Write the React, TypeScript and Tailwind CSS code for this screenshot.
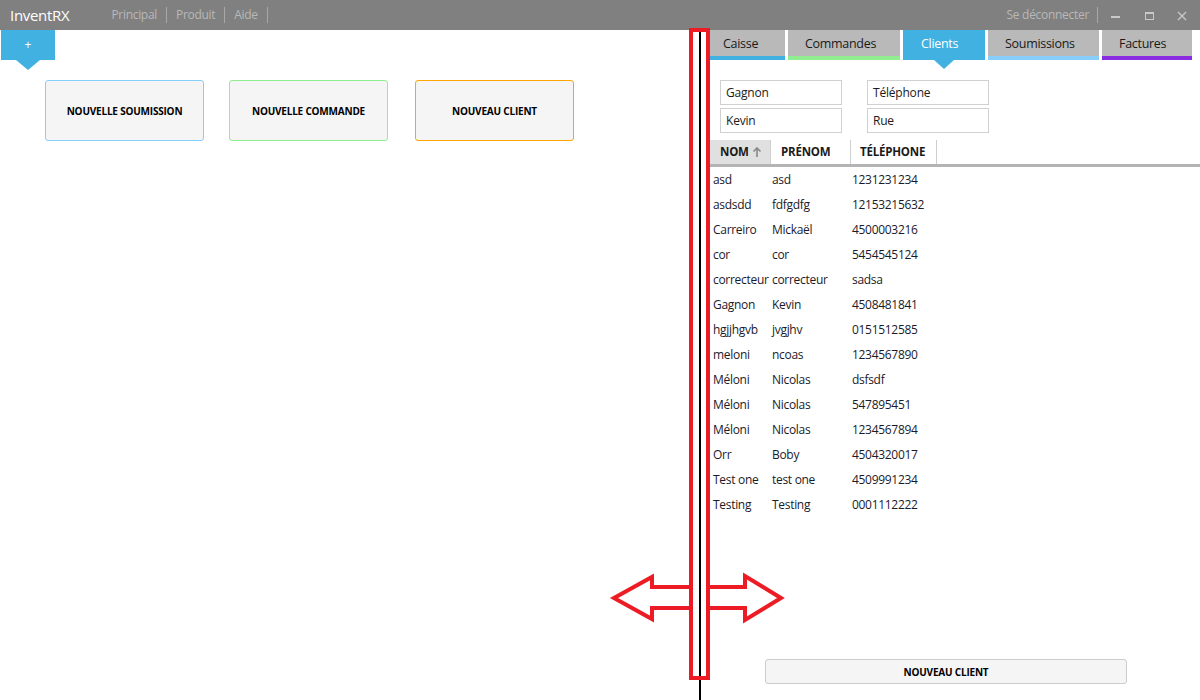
import React from "react";

const rows: [string, string, string][] = [
  ["asd", "asd", "1231231234"],
  ["asdsdd", "fdfgdfg", "12153215632"],
  ["Carreiro", "Mickaël", "4500003216"],
  ["cor", "cor", "5454545124"],
  ["correcteur", "correcteur", "sadsa"],
  ["Gagnon", "Kevin", "4508481841"],
  ["hgjjhgvb", "jvgjhv", "0151512585"],
  ["meloni", "ncoas", "1234567890"],
  ["Méloni", "Nicolas", "dsfsdf"],
  ["Méloni", "Nicolas", "547895451"],
  ["Méloni", "Nicolas", "1234567894"],
  ["Orr", "Boby", "4504320017"],
  ["Test one", "test one", "4509991234"],
  ["Testing", "Testing", "0001112222"],
];

const font = { fontFamily: '"Open Sans", "Noto Sans", sans-serif' };

function Tab({ label, stripe, w, active }: { label: string; stripe: string; w: string; active?: boolean }) {
  if (active) {
    return (
      <div className={`relative flex h-[30px] shrink-0 flex-col bg-[#41b1e1] ${w}`}>
        <div className="flex h-[26px] items-center pl-[18px] pt-[3px] text-[12.5px] tracking-[-0.3px] text-white">{label}</div>
        <div className="absolute left-1/2 top-[30px] h-0 w-0 -translate-x-1/2 border-l-[10px] border-r-[10px] border-t-[9px] border-l-transparent border-r-transparent border-t-[#41b1e1]" />
      </div>
    );
  }
  return (
    <div className={`flex h-[30px] shrink-0 flex-col bg-[#b9b9b9] ${w}`}>
      <div className="flex h-[26px] items-center pl-[17px] pt-[3px] text-[12.5px] tracking-[-0.3px] text-[#1a1a1a]">{label}</div>
      <div className={`h-[4px] ${stripe}`} />
    </div>
  );
}

export default function App() {
  return (
    <div className="relative flex h-[700px] w-[1200px] flex-col overflow-hidden bg-white" style={font}>
      {/* Top bar */}
      <div className="flex h-[30px] shrink-0 items-center bg-[#808080]">
        <div className="ml-[10px] text-[15px] tracking-[-0.3px] text-white">InventRX</div>
        <div className="ml-[42px] flex items-center text-[12px] tracking-[-0.3px] text-[#b8b8b8]">
          <span>Principal</span>
          <span className="mx-[9px] h-[16px] w-px bg-[#a8a8a8]" />
          <span>Produit</span>
          <span className="mx-[9px] h-[16px] w-px bg-[#a8a8a8]" />
          <span>Aide</span>
          <span className="ml-[9px] h-[16px] w-px bg-[#a8a8a8]" />
        </div>
        <div className="ml-auto flex items-center">
          <span className="text-[12px] tracking-[-0.3px] text-[#b8b8b8]">Se déconnecter</span>
          <span className="ml-[8px] h-[16px] w-px bg-[#a8a8a8]" />
          <svg width="102" height="30" viewBox="0 0 102 30">
            <rect x="13" y="16" width="9" height="2" fill="#c8c8c8" />
            <rect x="47.5" y="12.5" width="8" height="7" fill="none" stroke="#c8c8c8" strokeWidth="1" />
            <rect x="47" y="12" width="9" height="2" fill="#c8c8c8" />
            <path d="M80 12 L88 20 M88 12 L80 20" stroke="#c8c8c8" strokeWidth="1.3" />
          </svg>
        </div>
      </div>

      {/* Main */}
      <div className="flex flex-1">
        {/* Left pane */}
        <div className="flex w-[699px] shrink-0 flex-col">
          <div className="relative ml-[1px] flex h-[30px] w-[54px] items-center justify-center bg-[#41b1e1] text-[12px] text-white">
            +
            <div className="absolute left-1/2 top-[30px] h-0 w-0 -translate-x-1/2 border-l-[12px] border-r-[12px] border-t-[10px] border-l-transparent border-r-transparent border-t-[#41b1e1]" />
          </div>
          <div className="ml-[45px] mt-[20px] flex gap-[25px]">
            <button className="flex h-[61px] w-[159px] items-center justify-center rounded-[3px] border border-[#87cefa] bg-[#f5f5f5] pt-[1px] text-[10px] font-bold tracking-[-0.2px] text-black">
              NOUVELLE SOUMISSION
            </button>
            <button className="flex h-[61px] w-[159px] items-center justify-center rounded-[3px] border border-[#90ee90] bg-[#f5f5f5] pt-[1px] text-[10px] font-bold tracking-[-0.2px] text-black">
              NOUVELLE COMMANDE
            </button>
            <button className="ml-[2px] flex h-[61px] w-[159px] items-center justify-center rounded-[3px] border border-[#ffa500] bg-[#f5f5f5] pt-[1px] text-[10px] font-bold tracking-[-0.2px] text-black">
              NOUVEAU CLIENT
            </button>
          </div>
        </div>

        {/* Divider */}
        <div className="w-[2px] shrink-0 bg-black" />

        {/* Right pane */}
        <div className="flex min-w-0 flex-1 flex-col overflow-hidden pl-[9px]">
          <div className="flex gap-[3px]">
            <div className="flex h-[30px] w-[75px] shrink-0 flex-col bg-[#b9b9b9]">
              <div className="flex h-[26px] items-center pl-[13px] pt-[3px] text-[12.5px] tracking-[-0.3px] text-[#1a1a1a]">Caisse</div>
              <div className="h-[4px] bg-[#41b1e1]" />
            </div>
            <Tab label="Commandes" stripe="bg-[#90ee90]" w="w-[112px]" />
            <Tab label="Clients" stripe="" w="w-[82px]" active />
            <Tab label="Soumissions" stripe="bg-[#87cefa]" w="w-[111px]" />
            <Tab label="Factures" stripe="bg-[#8a2be2]" w="w-[90px]" />
          </div>

          <div className="ml-[10px] mt-[20px] grid w-[269px] grid-cols-[122px_122px] gap-x-[25px] gap-y-[3px]">
            {["Gagnon", "Téléphone", "Kevin", "Rue"].map((t) => (
              <div key={t} className="flex h-[25px] items-center border border-[#d0d0d0] pl-[5px] text-[12px] tracking-[-0.2px] text-[#1a1a1a]">
                {t}
              </div>
            ))}
          </div>

          <div className="mt-[7px] flex h-[27px] border-b-[3px] border-[#b4b4b4] text-[11.5px] font-bold tracking-[-0.2px] text-[#1a1a1a]">
            <div className="flex w-[60px] items-center bg-[#e0e0e0] pl-[10px]">
              NOM
              <svg width="10" height="11" viewBox="0 0 10 11" className="ml-[3px]">
                <path d="M5 1 L5 10 M1.5 4.5 L5 1 L8.5 4.5" stroke="#888" strokeWidth="1.6" fill="none" />
              </svg>
            </div>
            <div className="flex w-[80px] items-center border-l border-[#cfcfcf] pl-[10px]">PRÉNOM</div>
            <div className="flex w-[87px] items-center border-l border-r border-[#cfcfcf] pl-[9px]">TÉLÉPHONE</div>
          </div>

          <div className="flex flex-1 flex-col">
            {rows.map((r, i) => (
              <div key={i} className="flex h-[25px] items-center text-[12px] tracking-[-0.3px] text-[#1a1a2a]">
                <div className="w-[60px] pl-[3px] whitespace-nowrap">{r[0]}</div>
                <div className="w-[80px] pl-[2px] whitespace-nowrap">{r[1]}</div>
                <div className="pl-[2px]">{r[2]}</div>
              </div>
            ))}
          </div>

          <button className="mb-[16px] ml-[55px] flex h-[25px] w-[362px] shrink-0 items-center justify-center rounded-[3px] border border-[#cccccc] bg-[#f5f5f5] pt-[1px] text-[10px] font-bold tracking-[-0.2px] text-black">
            NOUVEAU CLIENT
          </button>
        </div>
      </div>

      {/* Red annotation overlay */}
      <svg className="pointer-events-none absolute left-0 top-0" width="1200" height="700" viewBox="0 0 1200 700">
        <rect x="691" y="30" width="17" height="648" fill="none" stroke="#ed1c24" strokeWidth="4" />
        <polyline points="689,587 652,587 652,577 614,598 652,619 652,608 689,608" fill="none" stroke="#ed1c24" strokeWidth="4" strokeLinejoin="miter" />
        <polyline points="710,587 745,587 745,576 781,598 745,620 745,608 710,608" fill="none" stroke="#ed1c24" strokeWidth="4" strokeLinejoin="miter" />
      </svg>
    </div>
  );
}
